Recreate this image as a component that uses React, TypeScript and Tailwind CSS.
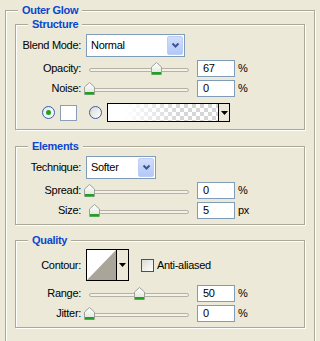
import React from 'react';

const Group: React.FC<{ title: string; className: string; children: React.ReactNode }> = ({ title, className, children }) => (
  <div className={`relative border border-[#ACA899] shadow-[inset_1px_1px_0_#fff,1px_1px_0_#fff] ${className}`}>
    <span className="absolute left-[12px] top-[-7px] px-[4px] bg-[#ECE9D8] font-bold text-[#0B46CF] leading-[13px]">{title}</span>
    {children}
  </div>
);

const Label: React.FC<{ text: string }> = ({ text }) => (
  <span className="w-[65px] shrink-0 text-right leading-[13px]">{text}</span>
);

const Chevron = () => (
  <svg width="9" height="7" viewBox="0 0 9 7">
    <path d="M1.5 1.5 L4.5 4.5 L7.5 1.5" fill="none" stroke="#3A5794" strokeWidth="2" />
  </svg>
);

const Combo: React.FC<{ value: string; width: string }> = ({ value, width }) => (
  <div className={`ml-[5px] h-[23px] ${width} flex border border-[#7F9DB9] bg-white p-[1px]`}>
    <span className="flex-1 pl-[3px] self-center leading-[13px]">{value}</span>
    <div className="w-[16px] flex items-center justify-center rounded-[2px] border border-[#BCCEF6] bg-gradient-to-b from-[#D2DEFC] to-[#B3C8F6]">
      <Chevron />
    </div>
  </div>
);

const Thumb = () => (
  <svg width="11" height="13" viewBox="0 0 11 13">
    <defs>
      <linearGradient id="th" x1="0" y1="0" x2="0" y2="1">
        <stop offset="0" stopColor="#FFFFFF" />
        <stop offset="1" stopColor="#E2E2DA" />
      </linearGradient>
    </defs>
    <path d="M0.5 5 L5.5 0.5 L10.5 5 L10.5 12.5 L0.5 12.5 Z" fill="url(#th)" stroke="#9BA39A" />
    <rect x="1" y="10" width="9" height="2.5" fill="#21A121" />
  </svg>
);

const SliderRow: React.FC<{ label: string; value: number; unit: string; className: string }> = ({ label, value, unit, className }) => (
  <div className={`flex items-center h-[17px] ${className}`}>
    <Label text={`${label}:`} />
    <div className="relative ml-[3px] w-[110px] h-[17px] px-[5px] flex items-center">
      <div className="w-full h-[4px] mt-[2px] rounded-[2px] border border-[#B5B2A4] bg-[#F2F1EA]" />
      <div className="absolute top-[2px]" style={{ left: `${value}px` }}>
        <Thumb />
      </div>
    </div>
    <div className="ml-[3px] w-[38px] h-[17px] border border-[#7F9DB9] bg-white pl-[5px] flex items-center leading-[13px]">{value}</div>
    <span className="ml-[3px] leading-[13px]">{unit}</span>
  </div>
);

const Radio: React.FC<{ checked?: boolean }> = ({ checked }) => (
  <div className={`w-[13px] h-[13px] rounded-full border border-[#3A5AAE] flex items-center justify-center ${checked ? 'bg-gradient-to-br from-[#E6E6E0] to-white' : 'bg-gradient-to-br from-[#D8D8D2] to-white'}`}>
    {checked && <div className="w-[5px] h-[5px] rounded-full bg-[#21A121]" />}
  </div>
);

const DownArrow = () => (
  <svg width="7" height="4" viewBox="0 0 7 4">
    <path d="M0 0 H7 L3.5 4 Z" fill="#000" />
  </svg>
);

export default function App() {
  return (
    <div className="w-[320px] h-[341px] overflow-hidden bg-[#ECE9D8] pt-[10px] pl-[5px] text-[11px] tracking-[-0.3px] text-black font-['Liberation_Sans',Arial,sans-serif]">
      <Group title="Outer Glow" className="w-[310px] h-[340px] pt-[13px] pl-[9px]">
        <Group title="Structure" className="w-[290px] pt-[9px] pb-[7px]">
          <div className="flex items-center h-[23px]">
            <Label text="Blend Mode:" />
            <Combo value="Normal" width="w-[99px]" />
          </div>
          <SliderRow label="Opacity" value={67} unit="%" className="mt-[3px]" />
          <SliderRow label="Noise" value={0} unit="%" className="mt-[3px]" />
          <div className="flex items-center h-[19px] mt-[6px] pl-[26px]">
            <Radio checked />
            <div className="ml-[5px] w-[17px] h-[16px] border border-[#8C9DBB] bg-white" />
            <div className="ml-[12px]">
              <Radio />
            </div>
            <div className="ml-[5px] w-[123px] h-[19px] border border-black flex">
              <div className="flex-1 bg-[linear-gradient(to_right,#fff_15%,rgba(255,255,255,0)_65%),conic-gradient(#D6D6D6_25%,#fff_0_50%,#D6D6D6_0_75%,#fff_0)] bg-[length:100%_100%,8px_8px]" />
              <div className="w-[11px] border-l border-black bg-[#ECE9D8] flex items-center justify-center">
                <DownArrow />
              </div>
            </div>
          </div>
        </Group>

        <Group title="Elements" className="w-[290px] mt-[16px] pt-[9px] pb-[5px]">
          <div className="flex items-center h-[23px]">
            <Label text="Technique:" />
            <Combo value="Softer" width="w-[70px]" />
          </div>
          <SliderRow label="Spread" value={0} unit="%" className="mt-[3px]" />
          <SliderRow label="Size" value={5} unit="px" className="mt-[3px]" />
        </Group>

        <Group title="Quality" className="w-[290px] mt-[15px] pt-[8px] pb-[5px]">
          <div className="flex items-center h-[32px]">
            <Label text="Contour:" />
            <div className="ml-[5px] w-[43px] h-[32px] border border-black flex">
              <svg width="29" height="30" viewBox="0 0 29 30" className="shrink-0">
                <rect width="29" height="30" fill="#fff" />
                <path d="M0 30 L29 0 L29 30 Z" fill="#A9A599" />
              </svg>
              <div className="flex-1 border-l border-black bg-[#ECE9D8] flex items-center justify-center">
                <DownArrow />
              </div>
            </div>
            <div className="ml-[12px] w-[13px] h-[13px] border border-[#2451C9] bg-gradient-to-br from-[#DCDCD5] to-white" />
            <span className="ml-[3px] leading-[13px]">Anti-aliased</span>
          </div>
          <SliderRow label="Range" value={50} unit="%" className="mt-[4px]" />
          <SliderRow label="Jitter" value={0} unit="%" className="mt-[3px]" />
        </Group>
      </Group>
    </div>
  );
}
